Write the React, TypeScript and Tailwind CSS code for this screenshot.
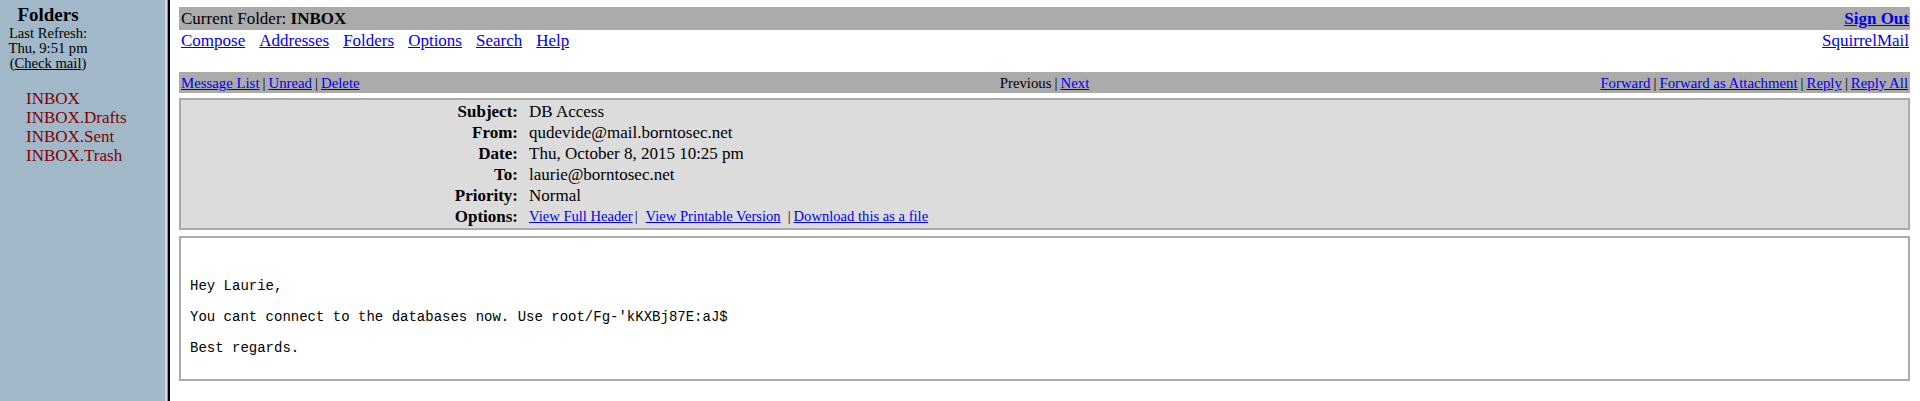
import React from 'react';

const serif = { fontFamily: '"Liberation Serif", "Times New Roman", serif' };

const Link: React.FC<{ children: React.ReactNode; className?: string }> = ({ children, className }) => (
  <a href="#" className={`text-[#0000ee] underline ${className ?? ''}`}>
    {children}
  </a>
);

const Sep: React.FC = () => <span className="mx-[3px] text-black">|</span>;

const folders = ['INBOX', 'INBOX.Drafts', 'INBOX.Sent', 'INBOX.Trash'];

const headerRows: { label: string; value: string }[] = [
  { label: 'Subject:', value: 'DB Access' },
  { label: 'From:', value: 'qudevide@mail.borntosec.net' },
  { label: 'Date:', value: 'Thu, October 8, 2015 10:25 pm' },
  { label: 'To:', value: 'laurie@borntosec.net' },
  { label: 'Priority:', value: 'Normal' },
];

const Sidebar: React.FC = () => (
  <div className="w-[165px] shrink-0 bg-[#a0b8c8] text-black">
    <div className="w-[96px] pt-[4px] text-center">
      <div className="text-[19px] font-bold leading-[22px]">Folders</div>
      <div className="text-[14.6px] leading-[15px]">Last Refresh:</div>
      <div className="text-[14.6px] leading-[15px]">Thu, 9:51 pm</div>
      <div className="text-[14.6px] leading-[15px]">
        (<span className="underline">Check mail</span>)
      </div>
    </div>
    <ul className="mt-[18px] pl-[26px] text-[17px] leading-[19px] text-[#800000]">
      {folders.map((f) => (
        <li key={f}>{f}</li>
      ))}
    </ul>
  </div>
);

const FrameBorder: React.FC = () => (
  <div className="flex shrink-0">
    <div className="w-[2px] bg-[#d8d8d8]" />
    <div className="w-[1px] bg-[#8c8c8c]" />
    <div className="w-[2px] bg-black" />
  </div>
);

export default function App() {
  return (
    <div className="flex h-[401px] w-[1920px] overflow-hidden bg-white" style={serif}>
      <Sidebar />
      <FrameBorder />
      <div className="flex-1 pl-[9px] pr-[10px] pt-[7px] text-black">
        {/* title bar */}
        <div className="flex h-[23px] items-center justify-between bg-[#ababab] pl-[2px] pr-[1px] text-[17px]">
          <span>
            Current Folder: <b>INBOX</b>
          </span>
          <Link className="font-bold">Sign Out</Link>
        </div>

        {/* menu */}
        <div className="flex h-[22px] items-center justify-between pl-[2px] pr-[1px] text-[17px]">
          <div className="flex gap-[14px]">
            <Link>Compose</Link>
            <Link>Addresses</Link>
            <Link>Folders</Link>
            <Link>Options</Link>
            <Link>Search</Link>
            <Link>Help</Link>
          </div>
          <Link>SquirrelMail</Link>
        </div>

        {/* message nav bar */}
        <div className="mt-[20px] grid h-[21px] grid-cols-3 items-center bg-[#ababab] px-[2px] text-[14.8px]">
          <div>
            <Link>Message List</Link>
            <Sep />
            <Link>Unread</Link>
            <Sep />
            <Link>Delete</Link>
          </div>
          <div className="text-center">
            Previous
            <Sep />
            <Link>Next</Link>
          </div>
          <div className="text-right">
            <Link>Forward</Link>
            <Sep />
            <Link>Forward as Attachment</Link>
            <Sep />
            <Link>Reply</Link>
            <Sep />
            <Link>Reply All</Link>
          </div>
        </div>

        {/* headers */}
        <div className="mt-[5px] border-2 border-[#ababab] bg-[#dcdcdc] py-[1px]">
          {headerRows.map((r) => (
            <div key={r.label} className="flex h-[21px] items-center text-[17px]">
              <div className="w-[337px] shrink-0 text-right font-bold">{r.label}</div>
              <div className="pl-[11px]">{r.value}</div>
            </div>
          ))}
          <div className="flex h-[21px] items-center">
            <div className="w-[337px] shrink-0 text-right text-[17px] font-bold">Options:</div>
            <div className="pl-[11px] text-[14.6px]">
              <Link>View Full Header</Link>
              <span className="ml-[2px] mr-[8px]">|</span>
              <Link>View Printable Version</Link>
              <span className="ml-[7px] mr-[3px]">|</span>
              <Link>Download this as a file</Link>
            </div>
          </div>
        </div>

        {/* body */}
        <div className="mt-[6px] border-2 border-[#ababab] bg-white pb-[22px] pl-[9px] pt-[41px]">
          <pre
            className="text-[14px] leading-[15.5px] text-black"
            style={{ fontFamily: '"Liberation Mono", "Courier New", monospace' }}
          >
            {"Hey Laurie,\n\nYou cant connect to the databases now. Use root/Fg-'kKXBj87E:aJ$\n\nBest regards."}
          </pre>
        </div>
      </div>
    </div>
  );
}
